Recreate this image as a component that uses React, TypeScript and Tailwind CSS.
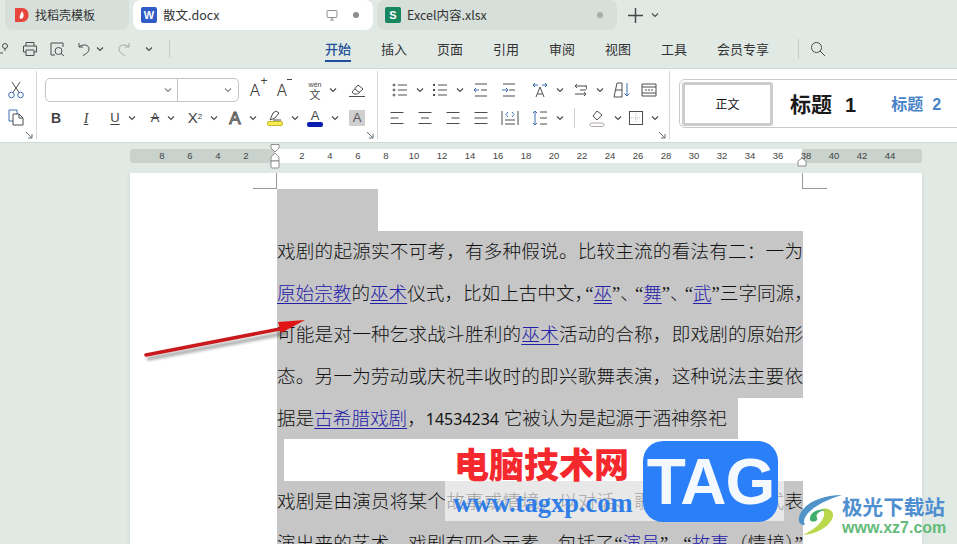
import React from "react";

const S = "#4a4f4d";
const B = "#3f6fb0";
type P = { children: React.ReactNode; w?: number; h?: number };
const Svg = ({ children, w = 20, h = 20 }: P) => (
  <svg width={w} height={h} viewBox={`0 0 ${w} ${h}`} fill="none" stroke={S} strokeWidth="1" className="shrink-0">
    {children}
  </svg>
);
const Chev = ({ c = S }: { c?: string }) => (
  <svg width="8" height="6" viewBox="0 0 8 6" fill="none" stroke={c} strokeWidth="1.2" className="shrink-0">
    <path d="M1 1.5 4 4.5 7 1.5" />
  </svg>
);
const Cell = ({ w, chev, children }: { w: number; chev?: boolean; children: React.ReactNode }) => (
  <div style={{ width: w }} className="flex items-center justify-center gap-[8px] shrink-0">
    {children}
    {chev && <Chev />}
  </div>
);
const Launcher = () => (
  <svg width="8" height="8" viewBox="0 0 8 8" fill="none" stroke="#66707a" strokeWidth="1" className="absolute right-[3px] bottom-0">
    <path d="M1 1 7 7M3 7H7V3" />
  </svg>
);
const GA = () => (
  <span className="text-[16px] leading-none text-[#444] font-light font-['Inter',sans-serif]">A</span>
);

const Lines = ({ rows, align }: { rows: number[]; align: "l" | "c" | "r" }) => (
  <Svg w={16} h={16}>
    {rows.map((r, i) => {
      const x = align === "l" ? 1.5 : align === "r" ? 14.5 - r : (16 - r) / 2;
      return <path key={i} d={`M${x} ${2.5 + i * 5.5}h${r}`} />;
    })}
  </Svg>
);

const TabsRow = () => (
  <div className="flex h-[31px] items-stretch pl-[5px] font-['Noto_Sans_CJK_SC',sans-serif] text-[12px] text-[#333]">
    <div className="w-[124px] h-[30px] bg-[#d6dfda] rounded-b-lg flex items-center pl-[9px] gap-[6px]">
      <svg width="15" height="16" viewBox="0 0 15 16">
        <path d="M1 1H8C12 1 14.5 4 14.5 8S12 15 8 15H1Z" fill="#e8453c" />
        <path d="M8 4C9 6 10 7 9.5 9.5 9 11.5 7 12 6 11.5 5 10 6 8 8 4Z" fill="#fff" />
      </svg>
      <span>找稻壳模板</span>
    </div>
    <div className="ml-[4px] w-[240px] h-[30px] bg-white rounded-lg flex items-center pl-[8px] pr-[14px]">
      <span className="w-[16px] h-[16px] rounded-[2px] bg-[#2f5cc5] text-white text-[11px] font-bold flex items-center justify-center font-['Liberation_Sans',sans-serif]">W</span>
      <span className="ml-[6px] text-[12.5px]">散文.docx</span>
      <svg className="ml-auto" width="12" height="12" viewBox="0 0 12 12" fill="none" stroke="#8a8f8c">
        <rect x="1" y="1.5" width="10" height="7" rx="1" />
        <path d="M4 11H8M6 8.5V11" />
      </svg>
      <span className="ml-[15px] w-[6px] h-[6px] rounded-full bg-[#8a8f8c]" />
    </div>
    <div className="ml-[4px] w-[240px] h-[30px] bg-[#d6dfda] rounded-lg flex items-center pl-[8px] pr-[14px]">
      <span className="w-[16px] h-[16px] rounded-[2px] bg-[#18875f] text-white text-[11px] font-bold flex items-center justify-center font-['Liberation_Sans',sans-serif]">S</span>
      <span className="ml-[6px] text-[12.5px]">Excel内容.xlsx</span>
      <span className="ml-auto w-[6px] h-[6px] rounded-full bg-[#a5aeaa]" />
    </div>
    <div className="ml-[11px] h-[30px] flex items-center gap-[8px]">
      <svg width="15" height="15" viewBox="0 0 15 15" stroke="#444" strokeWidth="1.4">
        <path d="M7.5 0V15M0 7.5H15" />
      </svg>
      <Chev />
    </div>
  </div>
);

const Menu = () => (
  <div className="flex h-[38px] items-center font-['Noto_Sans_CJK_SC',sans-serif] text-[13px] text-[#333] -mt-px">
    <div className="w-[325px] flex items-center shrink-0 relative h-full">
      <div className="w-[9px] overflow-hidden flex justify-end shrink-0">
        <Svg w={9} h={14}>
          <circle cx="5" cy="4" r="2.5" />
          <path d="M0 11H3M5 6.5V9" />
        </Svg>
      </div>
      <div className="ml-[12px] w-[18px] flex justify-center">
        <Svg w={16} h={16}>
          <path d="M4 5V1.5H12V5M4 11H1.5V5H14.5V11H12M4 9H12V14.5H4Z" />
        </Svg>
      </div>
      <div className="ml-[9px] w-[18px] flex justify-center">
        <Svg w={16} h={16}>
          <path d="M6 14H2V2H14V6" />
          <circle cx="9.5" cy="10" r="3.5" />
          <path d="M12 12.5 15 15" />
        </Svg>
      </div>
      <div className="ml-[9px] w-[18px] flex justify-center">
        <Svg w={15} h={15}>
          <path d="M2 1V5H6M2 5C5 2 12 2 12 7 12 10 9 12 6 13.5" />
        </Svg>
      </div>
      <div className="ml-[3px]"><Chev /></div>
      <div className="ml-[10px] w-[18px] flex justify-center opacity-40">
        <Svg w={15} h={15}>
          <path d="M13 1V5H9M13 5C10 2 3 2 3 7 3 10 6 12 9 13.5" />
        </Svg>
      </div>
      <div className="ml-[13px]"><Chev /></div>
      <div className="ml-[16px] w-px h-[18px] bg-[#c3ccc7]" />
    </div>
    <div className="flex items-center gap-[30px] h-full">
      <div className="relative h-full flex items-center text-[#1f4f9a] font-medium">
        开始
        <span className="absolute left-0 right-0 bottom-[6px] h-[2px] bg-[#1f4f9a]" />
      </div>
      <span>插入</span>
      <span>页面</span>
      <span>引用</span>
      <span>审阅</span>
      <span>视图</span>
      <span>工具</span>
      <span>会员专享</span>
    </div>
    <div className="ml-[29px] w-px h-[20px] bg-[#c3ccc7]" />
    <div className="ml-[11px]">
      <Svg w={16} h={16}>
        <circle cx="6.5" cy="6.5" r="5" />
        <path d="M10 10 15 15" />
      </Svg>
    </div>
  </div>
);

const Ribbon = () => (
  <div className="h-[75px] bg-white border-y border-[#cfd8d3] flex items-stretch pt-[2px] overflow-hidden">
    <div className="relative w-[37px] shrink-0 border-r border-[#d6d6d6] flex flex-col items-end pr-[12px] pt-[10px] gap-[10px] mb-[3px]">
      <svg width="16" height="18" viewBox="0 0 16 18" fill="none" stroke={B} strokeWidth="1">
        <circle cx="3.5" cy="14" r="2.8" />
        <circle cx="12.5" cy="14" r="2.8" />
        <path d="M5 11.5 12 1M11 11.5 4 1" stroke={S} />
      </svg>
      <svg width="16" height="17" viewBox="0 0 16 17" fill="none" stroke={B} strokeWidth="1">
        <path d="M5 12H1V1H9V5" />
        <path d="M5 5H11L15 9V16H5Z" stroke={S} />
        <path d="M11 5V9H15" stroke={S} />
      </svg>
      <Launcher />
    </div>

    <div className="relative w-[341px] shrink-0 border-r border-[#d6d6d6] pl-[6px] pt-[6px] mb-[3px]">
      <div className="flex items-center h-[26px]">
        <div className="ml-[2px] w-[194px] h-[24px] rounded-[5px] border border-[#c4c4c4] flex shrink-0">
          <div className="w-[132px] border-r border-[#c4c4c4] flex items-center justify-end pr-[5px]"><Chev c="#888" /></div>
          <div className="flex-1 flex items-center justify-end pr-[6px]"><Chev c="#888" /></div>
        </div>
        <div className="w-[4px]" />
        <Cell w={24}>
          <span className="relative">
            <GA />
            <span className="absolute -right-[7px] -top-[3px] text-[12px] leading-none text-[#444] font-['Liberation_Sans',sans-serif]">+</span>
          </span>
        </Cell>
        <div className="w-[3px]" />
        <Cell w={24}>
          <span className="relative">
            <GA />
            <span className="absolute -right-[5px] top-[1px] w-[5px] h-px bg-[#444]" />
          </span>
        </Cell>
        <div className="w-[12px]" />
        <Cell w={34} chev>
          <span className="flex flex-col items-center leading-none text-[#444] font-['Noto_Sans_CJK_SC',sans-serif]">
            <span className="text-[7px] leading-[8px] font-['Liberation_Sans',sans-serif]">wén</span>
            <span className="text-[11px] leading-[10px]">文</span>
          </span>
        </Cell>
        <div className="w-[5px]" />
        <Cell w={24}>
          <Svg w={18} h={16}>
            <path d="M4 10 10 3 15 7 9.5 12H6Z" />
            <path d="M7 7 12 11M1 14.5H17" />
          </Svg>
        </Cell>
      </div>
      <div className="flex items-center h-[30px]">
        <Cell w={26}><span className="font-bold text-[14px] text-[#444] font-['Liberation_Sans',sans-serif]">B</span></Cell>
        <Cell w={34}><span className="italic text-[14px] text-[#444] font-['Liberation_Serif',serif] underline decoration-1">I</span></Cell>
        <Cell w={40} chev><span className="underline underline-offset-2 text-[13px] text-[#444] font-['Liberation_Sans',sans-serif]">U</span></Cell>
        <Cell w={40} chev><span className="line-through text-[13px] text-[#444] font-['Liberation_Sans',sans-serif]">A</span></Cell>
        <Cell w={40} chev><span className="text-[15px] text-[#444] font-['Liberation_Sans',sans-serif]">X<sup className="text-[8px]">2</sup></span></Cell>
        <Cell w={40} chev>
          <span className="text-[17px] leading-none font-['Liberation_Sans',sans-serif] text-[#efe6dc] [-webkit-text-stroke:1px_#555]">A</span>
        </Cell>
        <Cell w={40} chev>
          <span className="flex flex-col items-center">
            <Svg w={14} h={11}>
              <path d="M2 10 5 3 8 1 11 3 7 8ZM5 10H13" />
            </Svg>
            <span className="w-[16px] h-[5px] rounded-[2px] bg-[#f6ec4e] border border-[#c9b72a]" />
          </span>
        </Cell>
        <Cell w={40} chev>
          <span className="flex flex-col items-center leading-none">
            <span className="text-[13px] leading-[12px] text-[#444] font-['Liberation_Sans',sans-serif]">A</span>
            <span className="w-[16px] h-[5px] rounded-[2px] bg-[#0a1fb0]" />
          </span>
        </Cell>
        <div className="w-[6px]" />
        <Cell w={16}>
          <span className="w-[16px] h-[16px] bg-[#cfcfcf] flex items-center justify-center text-[13px] text-[#555] font-['Liberation_Sans',sans-serif]">A</span>
        </Cell>
      </div>
      <Launcher />
    </div>

    <div className="relative w-[292px] shrink-0 border-r border-[#d6d6d6] pt-[7px] mb-[3px]">
      <div className="flex items-center h-[24px] pl-[12px]">
        <Cell w={36} chev>
          <Svg w={16} h={14}>
            <circle cx="2" cy="2" r="1" /><circle cx="2" cy="7" r="1" /><circle cx="2" cy="12" r="1" />
            <path d="M6 2H15M6 7H15M6 12H15" />
          </Svg>
        </Cell>
        <div className="w-[4px]" />
        <Cell w={36} chev>
          <Svg w={16} h={14}>
            <path d="M1 2H3M1 7H3M1 12H3" strokeWidth="2" />
            <path d="M6 2H15M6 7H15M6 12H15" />
          </Svg>
        </Cell>
        <div className="w-[1px]" />
        <Cell w={28}>
          <Svg w={16} h={14}>
            <path d="M2 1H14M8 7H14M2 13H14" />
            <path d="M6 7H1M3 5 1 7 3 9" stroke={B} />
          </Svg>
        </Cell>
        <Cell w={28}>
          <Svg w={16} h={14}>
            <path d="M2 1H14M8 7H14M2 13H14" />
            <path d="M1 7H7M5 5 7 7 5 9" stroke={B} />
          </Svg>
        </Cell>
        <div className="w-[4px]" />
        <Cell w={41} chev>
          <Svg w={16} h={16}>
            <path d="M4 15 8 5 12 15M5.5 12H10.5" />
            <path d="M1 3H6M3 1 1 3 3 5M10 3H15M13 1 15 3 13 5" stroke={B} />
          </Svg>
        </Cell>
        <Cell w={40} chev>
          <Svg w={16} h={14}>
            <path d="M15 3H3M5 1 3 3 5 5M13 3C15 3 15 7 13 7H8M3 11H14M12 9 14 11 12 13" />
          </Svg>
        </Cell>
        <Cell w={28}>
          <Svg w={18} h={16}>
            <path d="M1 15 4 1H9V15ZM2.5 8H9" />
            <path d="M14 1V14M11.5 11.5 14 14 16.5 11.5" stroke={B} />
          </Svg>
        </Cell>
        <Cell w={26}>
          <Svg w={16} h={14}>
            <path d="M1 1H15V13H1ZM1 4H15M1 10H15" />
            <path d="M5 6V8M11 6V8M8 6V8" />
          </Svg>
        </Cell>
      </div>
      <div className="flex items-center h-[30px] mt-[1px] pl-[5px]">
        <Cell w={28}><Lines rows={[13, 8, 13]} align="l" /></Cell>
        <Cell w={28}><Lines rows={[13, 8, 13]} align="c" /></Cell>
        <Cell w={28}><Lines rows={[13, 8, 13]} align="r" /></Cell>
        <Cell w={28}><Lines rows={[13, 13, 13]} align="c" /></Cell>
        <Cell w={30}>
          <Svg w={18} h={16}>
            <path d="M1 1V15M17 1V15M4 14H14M4 10H14" />
            <path d="M7 2 5 4.5 7 7M11 2 13 4.5 11 7" stroke={B} />
          </Svg>
        </Cell>
        <div className="w-[2px]" />
        <Cell w={42} chev>
          <Svg w={16} h={16}>
            <path d="M3 1V15M1 3 3 1 5 3M1 13 3 15 5 13" stroke={B} />
            <path d="M8 2H15M8 8H15M8 14H15" />
          </Svg>
        </Cell>
        <div className="ml-[5px] mr-[10px] w-px h-[20px] bg-[#d0d0d0]" />
        <Cell w={39} chev>
          <Svg w={18} h={18}>
            <path d="M5 7 9 2 14 6 9 11Z" />
            <rect x="2" y="14" width="14" height="3.5" rx="1.7" stroke="#b0a8a8" />
          </Svg>
        </Cell>
        <Cell w={40} chev>
          <Svg w={14} h={14}>
            <rect x="0.5" y="0.5" width="13" height="13" />
            <path d="M7 2V12M2 7H12" stroke="#bbb" strokeDasharray="1 1" />
          </Svg>
        </Cell>
      </div>
      <Launcher />
    </div>

    <div className="ml-[9px] mt-[8px] mb-[14px] w-[290px] shrink-0 rounded-[6px] border border-[#c9c9c9] flex items-center pl-[2px] font-['Noto_Sans_CJK_SC',sans-serif]">
      <div className="w-[91px] h-[44px] rounded-[3px] border-[3px] border-[#cccccc] flex items-center justify-center text-[12px] text-[#111] shrink-0">正文</div>
      <span className="ml-[17px] text-[21px] font-bold text-[#1a1a1a] whitespace-nowrap">标题<span className="ml-[13px] font-['Liberation_Sans',sans-serif] text-[20px]">1</span></span>
      <span className="ml-[35px] text-[16px] font-bold text-[#4a84c8] whitespace-nowrap">标题<span className="ml-[9px] font-['Liberation_Sans',sans-serif]">2</span></span>
    </div>
  </div>
);

const nums = [8, 6, 4, 2, 0, ...Array.from({ length: 22 }, (_, i) => (i + 1) * 2)];
const Ruler = () => (
  <div className="relative h-[30px] pt-[6px] pl-[130px] pr-[35px]">
    <div className="h-[14px] rounded-[3px] pl-[18px] flex items-center text-[9.5px] text-[#444] font-['Liberation_Sans',sans-serif] bg-[linear-gradient(to_right,#c9d2cd_145px,#ffffff_145px,#ffffff_672px,#c9d2cd_672px)]">
      {nums.map((n, i) => (
        <span key={i} className="w-[28px] shrink-0 text-center">{n === 0 ? "" : n}</span>
      ))}
    </div>
    <svg className="absolute left-[269px] top-0" width="12" height="30" viewBox="0 0 12 30" fill="#fff" stroke="#777" strokeWidth="0.8">
      <path d="M2 1.5H10V5L6 9 2 5Z" />
      <path d="M6 10 10 14V18H2V14Z" />
      <path d="M2 18H10V24Q10 25 9 25H3Q2 25 2 24Z" />
    </svg>
    <svg className="absolute left-[797px] top-[14px]" width="10" height="10" viewBox="0 0 10 10" fill="#fff" stroke="#777" strokeWidth="0.8">
      <path d="M1 4 5 1 9 4V9H1Z" />
    </svg>
  </div>
);

const A = ({ children }: { children: React.ReactNode }) => (
  <span className="text-[#2420a8] underline decoration-1 underline-offset-[3px]">{children}</span>
);
const Line = ({ children, justify = true, narrow = false }: { children: React.ReactNode; justify?: boolean; narrow?: boolean }) => (
  <div className={`h-[41.7px] leading-[41.7px] whitespace-nowrap bg-[#c6c6c6] ${justify ? "[text-align-last:justify]" : ""} ${narrow ? "w-[461px]" : ""}`}>
    {children}
  </div>
);
const Pn = ({ children }: { children: React.ReactNode }) => <span className="tracking-[-4px]">{children}</span>;

const Page = () => (
  <div className="h-[371px] overflow-hidden pl-[130px] pr-[35px]">
    <div className="relative h-full bg-white pl-[147px] pr-[119px] pt-[16px] shadow-[0_0_5px_rgba(0,0,0,0.08)] font-['Liberation_Serif','Noto_Sans_CJK_SC',serif] font-light text-[18.6px] text-[#111]">
      <div className="w-[101px] h-[42px] bg-[#c6c6c6]" />
      <Line>戏剧的起源实不可考，有多种假说。比较主流的看法有二：一为</Line>
      <Line>
        <A>原始宗教</A>的<A>巫术</A>仪式，比如上古中文<span className="tracking-[-8px]">，</span>“<A>巫</A>”<Pn>、</Pn>“<A>舞</A>”<Pn>、</Pn>“<A>武</A>”三字同源，
      </Line>
      <Line>可能是对一种乞求战斗胜利的<A>巫术</A>活动的合称，即戏剧的原始形</Line>
      <Line>态。另一为劳动或庆祝丰收时的即兴歌舞表演，这种说法主要依</Line>
      <Line justify={false} narrow>
        据是<A>古希腊戏剧</A>，<span className="font-['Noto_Sans',sans-serif] font-normal text-[16px]">14534234</span> 它被认为是起源于酒神祭祀
      </Line>
      <div className="h-[41.7px]"><div className="w-[7px] h-full bg-[#c6c6c6]" /></div>
      <Line>戏剧是由演员将某个故事或情境，以对话、歌唱或动作等方式表</Line>
      <Line>
        演出来的艺术。戏剧有四个元素，包括了“<A>演员</A>”<Pn>、</Pn>“<A>故事</A>（情境）”
      </Line>
      <div className="absolute left-[123px] top-[15px] w-[24px] h-px bg-[#999]" />
      <div className="absolute left-[146px] top-0 w-px h-[16px] bg-[#999]" />
      <div className="absolute left-[672px] top-0 w-px h-[16px] bg-[#999]" />
      <div className="absolute left-[672px] top-[15px] w-[25px] h-px bg-[#999]" />
    </div>
  </div>
);

const Overlays = () => (
  <>
    <svg className="absolute left-[140px] top-[312px]" width="172" height="50" viewBox="0 0 172 50">
      <defs>
        <filter id="sh" x="-10%" y="-50%" width="120%" height="200%">
          <feGaussianBlur stdDeviation="1.5" />
        </filter>
      </defs>
      <path d="M6 44 145 18" stroke="#000" strokeOpacity="0.35" strokeWidth="3.5" filter="url(#sh)" transform="translate(1 3)" />
      <path d="M6 43 145 16" stroke="#c9191d" strokeWidth="3.6" fill="none" strokeLinecap="round" />
      <path d="M138 10 165 8 141 21Z" fill="#e01414" />
    </svg>
    <div className="absolute left-[445px] top-[481px] w-[339px] h-[40px] bg-white/60 flex items-center pl-[8px] pt-[5px]">
      <span className="text-[26.5px] leading-none font-bold text-[#2f7ee8] font-['Liberation_Serif',serif]">www.tagxp.com</span>
    </div>
    <div className="absolute left-[454px] top-[442px] text-[35px] leading-[42px] font-black text-[#f5282d] font-['Noto_Sans_CJK_SC',sans-serif] whitespace-nowrap">电脑技术网</div>
    <div className="absolute left-[643px] top-[441px] w-[135px] h-[81px] rounded-[20px] bg-[#2b7ff8] flex items-center justify-center text-white/95 text-[64px] tracking-[-1px] font-bold font-['Liberation_Sans',sans-serif] leading-none">TAG</div>
    <svg className="absolute left-[797px] top-[494px]" width="46" height="42" viewBox="0 0 46 42" fill="none">
      <path d="M45 1C25 1 6 9 2 23 1 29 4 31 8 31 4 25 12 11 45 1Z" fill="#4f93c9" />
      <path d="M6 41C20 40 34 32 36 22 37 16 30 13 24 15 31 18 27 31 6 41Z" fill="#b9d84a" />
      <path d="M13 26C12 18 22 14 30 16 23 16 18 20 20 24 22 27 15 29 13 26Z" fill="#3fae6d" />
    </svg>
    <div className="absolute left-[842px] top-[493px] w-[110px] flex flex-col">
      <span className="text-[20.6px] leading-[26px] font-bold text-[#4f8fd0] font-['Noto_Sans_CJK_SC',sans-serif] whitespace-nowrap">极光下载站</span>
      <span className="text-[16px] leading-[18px] font-bold text-[#62bb78] font-['Liberation_Sans',sans-serif]">www.xz7.com</span>
    </div>
  </>
);

export default function App() {
  return (
    <div className="relative w-[957px] h-[544px] overflow-hidden bg-[#e0e9e4]">
      <TabsRow />
      <Menu />
      <Ribbon />
      <Ruler />
      <Page />
      <Overlays />
    </div>
  );
}
